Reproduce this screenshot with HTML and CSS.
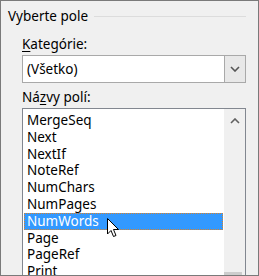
FILE: index.html
```html
<!DOCTYPE html>
<html lang="sk">
<head>
    <meta charset="UTF-8">
    <title>Vyberte pole</title>
    <link rel="stylesheet" href="styles.css">
</head>
<body>
    <div class="dialog">
        <div class="group-head">
            <span>Vyberte pole</span>
            <div class="group-line"></div>
        </div>
        <div class="field-label first"><u>K</u>ategórie:</div>
        <div class="combo">
            <div class="combo-text">(Všetko)</div>
            <div class="combo-btn">
                <svg width="10" height="6" viewBox="0 0 10 6"><path d="M1 1 L5 5 L9 1" fill="none" stroke="#555" stroke-width="1.6"/></svg>
            </div>
        </div>
        <div class="field-label">Ná<u>z</u>vy polí:</div>
        <div class="listbox">
            <ul class="items">
                <li>MergeSeq</li>
                <li>Next</li>
                <li>NextIf</li>
                <li>NoteRef</li>
                <li>NumChars</li>
                <li>NumPages</li>
                <li class="selected">NumWords
                    <svg class="cursor" width="13" height="20" viewBox="0 0 13 20"><path d="M0.5 0.5 L0.5 16 L4 12.5 L6.5 18.5 L9 17.5 L6.5 11.5 L11.5 11.5 Z" fill="#fff" stroke="#000" stroke-width="1"/></svg>
                </li>
                <li>Page</li>
                <li>PageRef</li>
                <li>Print</li>
            </ul>
            <div class="scrollbar">
                <svg class="up" width="10" height="6" viewBox="0 0 10 6"><path d="M1 5 L5 1 L9 5" fill="none" stroke="#606060" stroke-width="1.6"/></svg>
                <div class="thumb"></div>
            </div>
        </div>
    </div>
</body>
</html>
```

FILE: styles.css
```css
body, html {
    margin: 0;
    padding: 0;
    background: #f0f0f0;
}
.dialog {
    box-sizing: border-box;
    width: 259px;
    height: 276px;
    border: 1px solid #7a7a7a;
    background: #f0f0f0;
    padding: 4px 12px 0 7px;
    font-family: "Noto Sans", sans-serif;
    font-size: 13.5px;
    color: #000;
    overflow: hidden;
}
.group-head {
    display: flex;
    align-items: center;
    height: 22px;
}
.group-line {
    flex: 1;
    height: 1px;
    background: #dcdcdc;
    margin-left: 6px;
}
.field-label {
    margin-left: 14px;
    height: 22px;
    line-height: 22px;
    margin-top: 3px;
}
.field-label.first {
    margin-top: 6px;
}
.field-label u {
    text-decoration-thickness: 1px;
    text-underline-offset: 2px;
}
.combo {
    margin-left: 14px;
    height: 28px;
    box-sizing: border-box;
    border: 1px solid #a9a9a9;
    background: #fff;
    display: flex;
}
.combo-text {
    flex: 1;
    line-height: 26px;
    padding-left: 4px;
}
.combo-btn {
    width: 20px;
    background: #e8e8e8;
    border-left: 1px solid #a9a9a9;
    display: flex;
    align-items: center;
    justify-content: center;
}
.listbox {
    margin-left: 14px;
    height: 180px;
    border: 1px solid #828790;
    background: #fff;
    display: flex;
}
.items {
    list-style: none;
    margin: 0;
    padding: 3px 1px 0 1px;
    flex: 1;
}
.items li {
    height: 16.8px;
    line-height: 16.8px;
    padding-left: 3px;
    position: relative;
    box-sizing: border-box;
}
.items li.selected {
    background: #3399ff;
    color: #fff;
    outline: 1px dotted #d9822b;
    outline-offset: -1px;
}
.cursor {
    position: absolute;
    left: 83px;
    top: 5px;
}
.scrollbar {
    width: 21px;
    background: #f0f0f0;
    position: relative;
    display: flex;
    flex-direction: column;
    align-items: center;
}
.scrollbar .up {
    margin-top: 9px;
}
.thumb {
    position: absolute;
    left: 0;
    right: 3px;
    top: 163px;
    height: 4px;
    background: #cdcdcd;
}
```
